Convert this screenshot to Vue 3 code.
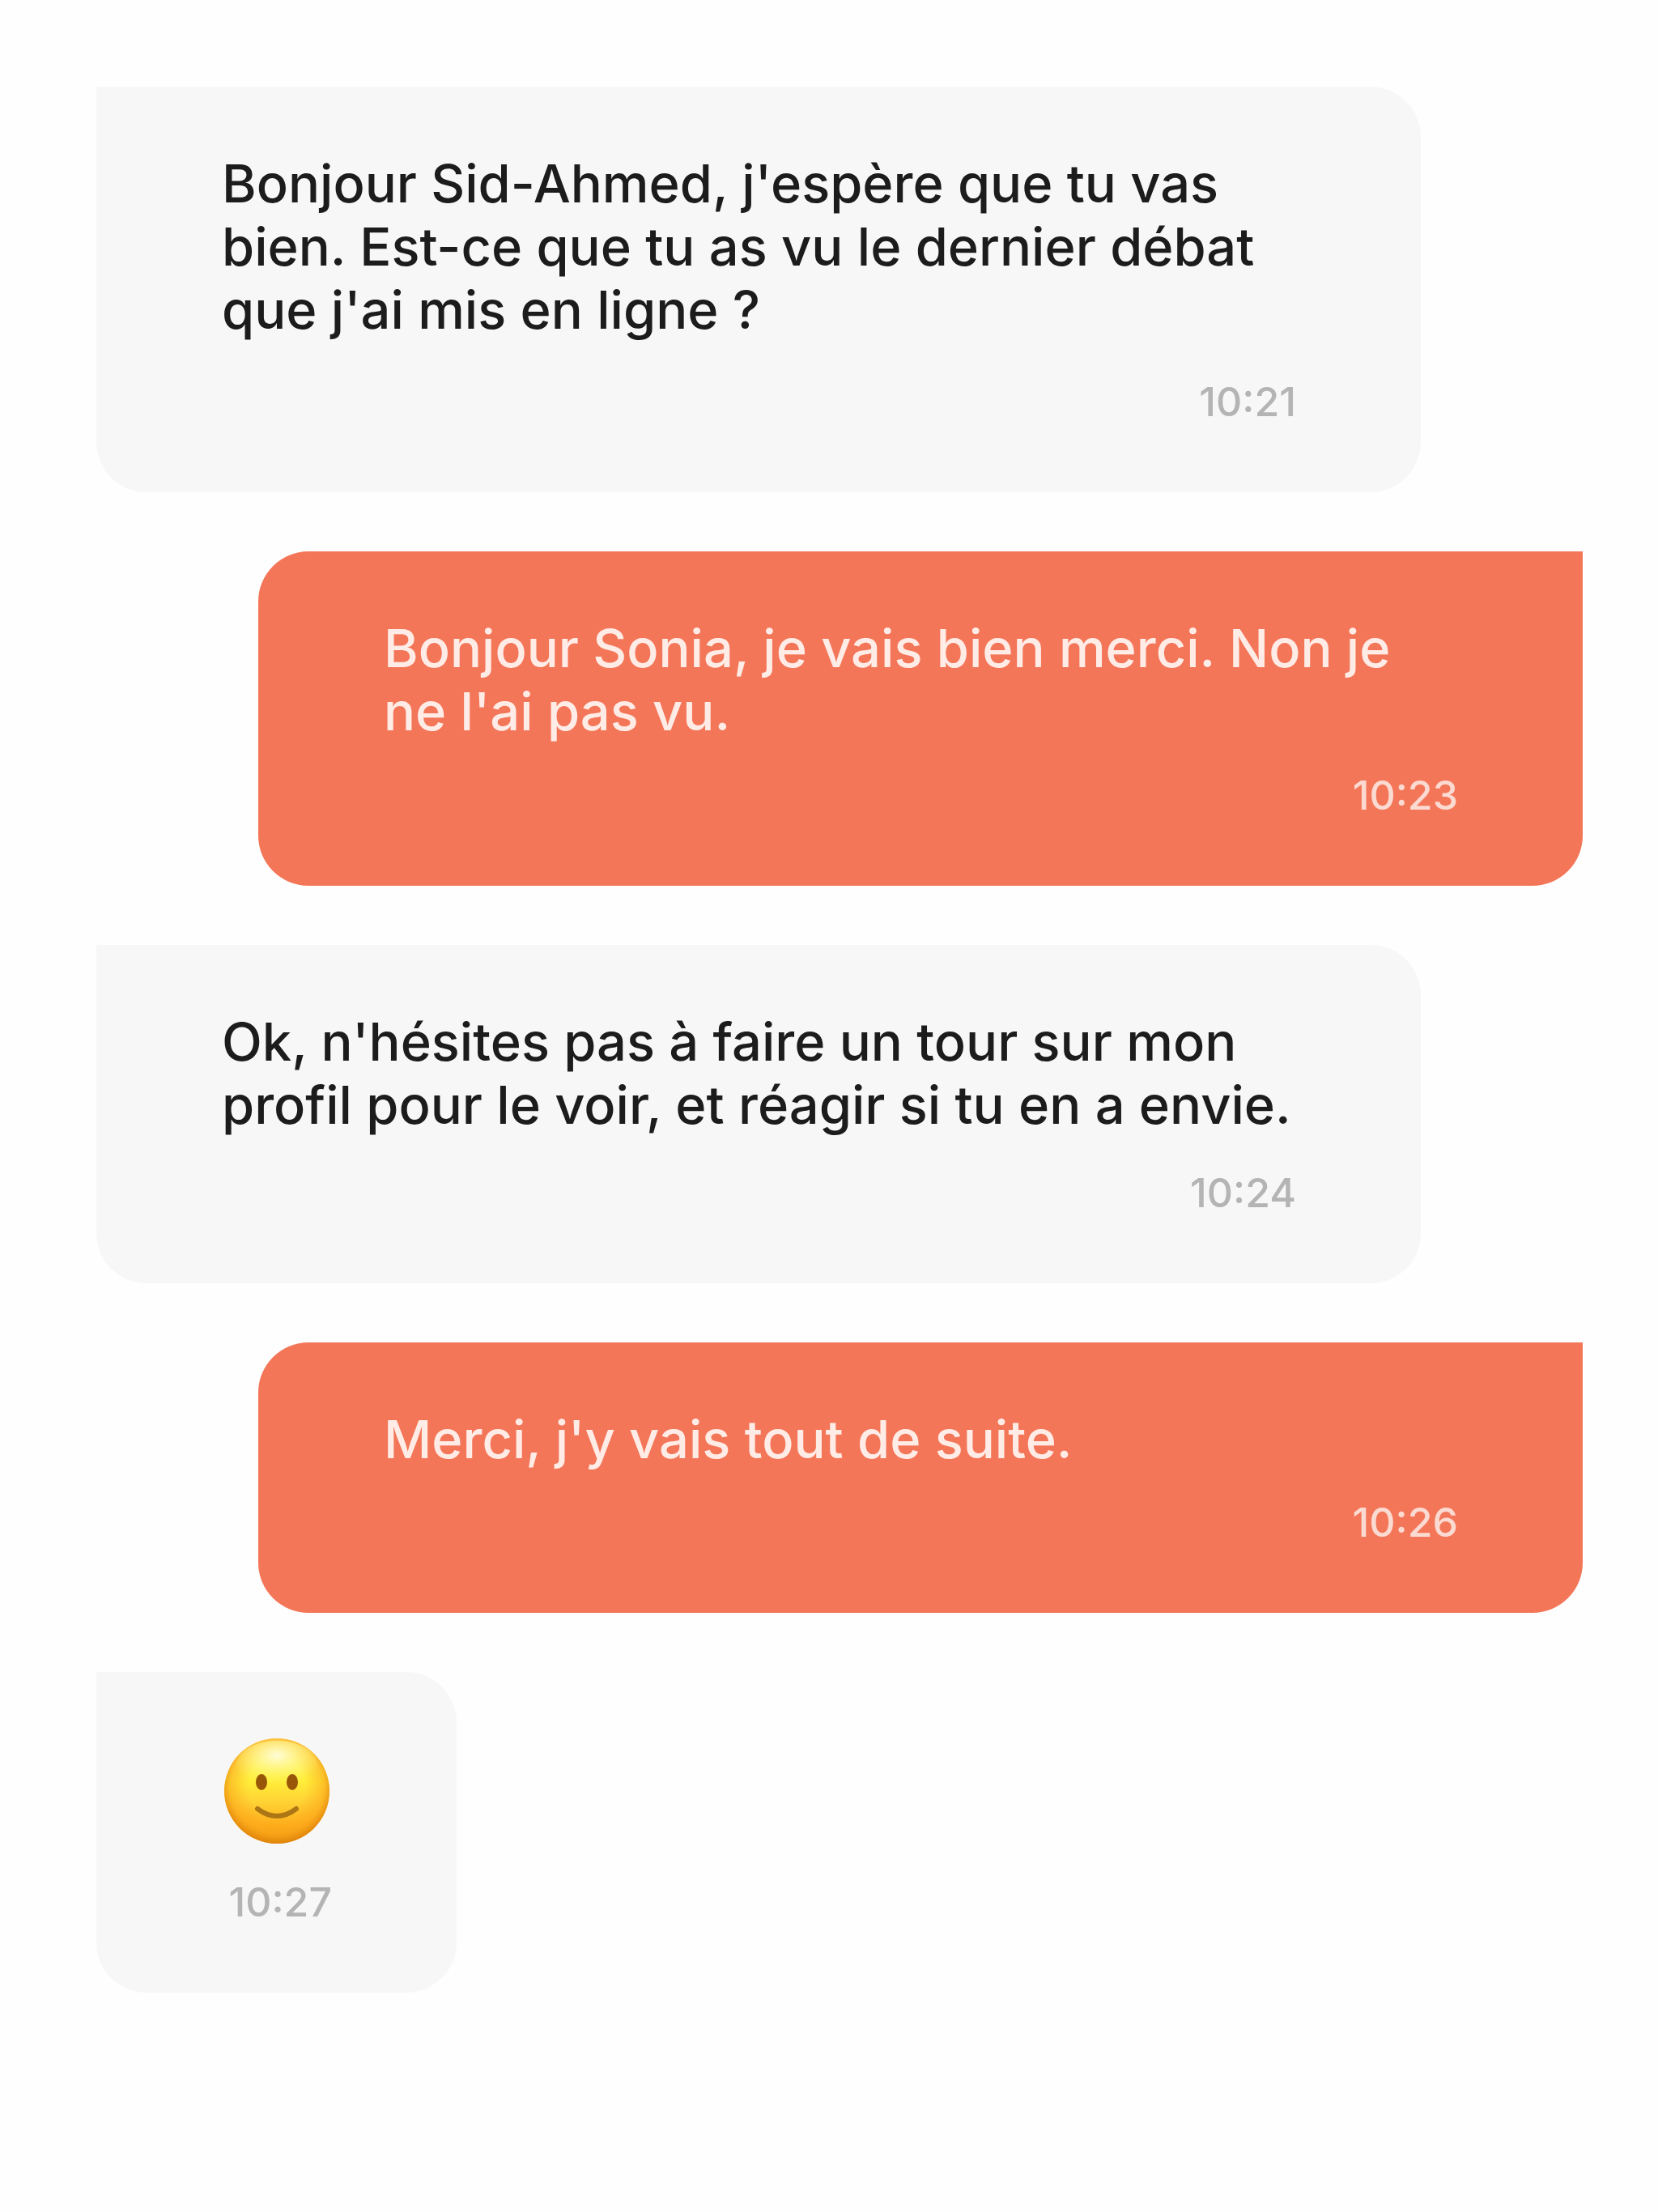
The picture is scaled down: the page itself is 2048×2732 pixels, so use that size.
<script setup>
const messages = [
  {
    from: 'incoming',
    size: 'large',
    text: "Bonjour Sid-Ahmed, j'espère que tu vas\nbien. Est-ce que tu as vu le dernier débat\nque j'ai mis en ligne ?",
    time: '10:21',
  },
  {
    from: 'outgoing',
    size: 'medium',
    text: "Bonjour Sonia, je vais bien merci. Non je\nne l'ai pas vu.",
    time: '10:23',
  },
  {
    from: 'incoming',
    size: 'medium',
    text: "Ok, n'hésites pas à faire un tour sur mon\nprofil pour le voir, et réagir si tu en a envie.",
    time: '10:24',
  },
  {
    from: 'outgoing',
    size: 'small',
    text: "Merci, j'y vais tout de suite.",
    time: '10:26',
  },
  { from: 'incoming', size: 'emoji', text: '', time: '10:27' },
]
</script>

<template>
  <main class="chat">
    <article
      v-for="message in messages"
      :key="message.time"
      class="bubble"
      :class="[message.from, message.size]"
    >
      <p v-if="message.text" class="text">{{ message.text }}</p>
      <svg v-else class="smiley" viewBox="0 0 136 132" role="img" aria-label="Sourire">
        <defs>
          <linearGradient id="face" x1="0" y1="0" x2="0" y2="1">
            <stop offset="0" stop-color="#fff27a" />
            <stop offset="0.4" stop-color="#ffee3a" />
            <stop offset="0.62" stop-color="#ffd033" />
            <stop offset="0.82" stop-color="#ffb01c" />
            <stop offset="1" stop-color="#ee9510" />
          </linearGradient>
          <radialGradient id="rim" cx="0.5" cy="0.46" r="0.54">
            <stop offset="0.5" stop-color="#fba81c" stop-opacity="0" />
            <stop offset="0.82" stop-color="#fba41a" stop-opacity="0.55" />
            <stop offset="1" stop-color="#dd8208" stop-opacity="0.95" />
          </radialGradient>
          <radialGradient id="shine" cx="0.5" cy="0.3" r="0.6">
            <stop offset="0" stop-color="#fffde0" stop-opacity="0.95" />
            <stop offset="0.5" stop-color="#fffa9a" stop-opacity="0.55" />
            <stop offset="1" stop-color="#fff76a" stop-opacity="0" />
          </radialGradient>
        </defs>
        <circle cx="68" cy="66" r="65" fill="url(#face)" />
        <circle cx="68" cy="66" r="65" fill="url(#rim)" />
        <ellipse cx="68" cy="34" rx="50" ry="30" fill="url(#shine)" />
        <ellipse cx="49" cy="55" rx="7" ry="10" fill="#985608" />
        <ellipse cx="87" cy="55" rx="7" ry="10" fill="#985608" />
        <path
          d="M44 88 Q68 106 92 88"
          fill="none"
          stroke="#ad7615"
          stroke-width="6"
          stroke-linecap="round"
        />
      </svg>
      <time class="time">{{ message.time }}</time>
    </article>
  </main>
</template>

<style>
body {
  margin: 0;
  background: #fefefe;
}
</style>

<style scoped>
.chat {
  display: flex;
  flex-direction: column;
  gap: 73px;
  padding: 107px 93px 107px 119px;
  font-family: Inter, 'Open Sans', sans-serif;
  font-weight: 500;
}

.bubble {
  box-sizing: border-box;
  display: flex;
  flex-direction: column;
  justify-content: space-between;
  width: calc(100% - 200px);
  padding: 81px 154px 84px 155px;
}

.incoming {
  align-self: flex-start;
  border-radius: 0 62px 62px 62px;
  background: #f7f7f7;
  color: #1c1c1c;
}

.outgoing {
  align-self: flex-end;
  border-radius: 62px 0 62px 62px;
  background: #f47658;
  color: #ffece7;
}

.large {
  min-height: 501px;
}

.incoming.medium {
  min-height: 418px;
}

.outgoing.medium {
  min-height: 413px;
}

.small {
  min-height: 334px;
}

.emoji {
  width: auto;
  min-height: 396px;
}

.text {
  margin: 0;
  font-size: 65px;
  line-height: 78px;
  white-space: pre-line;
}

.smiley {
  width: 136px;
  height: 132px;
}

.time {
  align-self: flex-end;
  font-size: 50px;
  line-height: 56px;
}

.incoming .time {
  color: #b4b4b4;
}

.outgoing .time {
  color: #fbdad2;
}
</style>
